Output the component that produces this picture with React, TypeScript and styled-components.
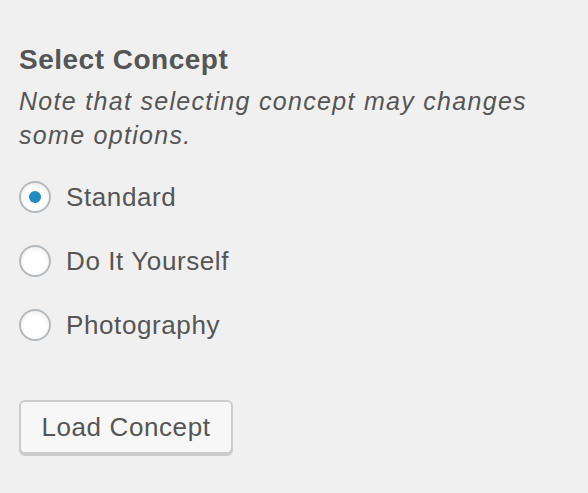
import styled, { createGlobalStyle } from "styled-components";

const GlobalStyle = createGlobalStyle`
  html, body {
    margin: 0;
    padding: 0;
    background: #f0f0f0;
  }
  body {
    font-family: "Liberation Sans", Arial, sans-serif;
    color: #555;
  }
`;

const Panel = styled.div`
  padding: 40px 19px 0;
  width: 588px;
  height: 493px;
  box-sizing: border-box;
`;

const Heading = styled.h3`
  margin: 0;
  font-size: 28px;
  line-height: 40px;
  font-weight: 700;
  letter-spacing: 0.5px;
  color: #555;
`;

const Note = styled.p`
  margin: 4px 0 0;
  font-size: 25px;
  line-height: 34px;
  font-style: italic;
  letter-spacing: 1.3px;
  color: #555;
  max-width: 530px;
`;

const OptionList = styled.div`
  display: flex;
  flex-direction: column;
  gap: 32px;
  margin-top: 29px;
`;

const Option = styled.label`
  display: flex;
  align-items: center;
  gap: 15px;
  font-size: 26px;
  line-height: 32px;
  letter-spacing: 0.6px;
  color: #555;
  cursor: pointer;
`;

const Radio = styled.span<{ $checked?: boolean }>`
  position: relative;
  width: 32px;
  height: 32px;
  box-sizing: border-box;
  border-radius: 50%;
  border: 2px solid #b4b9be;
  background: #fff;
  box-shadow: inset 0 2px 4px rgba(0, 0, 0, 0.08);
  flex-shrink: 0;

  &::after {
    content: "";
    display: ${({ $checked }) => ($checked ? "block" : "none")};
    position: absolute;
    left: 50%;
    top: 50%;
    width: 12px;
    height: 12px;
    margin: -6px 0 0 -6px;
    border-radius: 50%;
    background: #1e8cbe;
  }
`;

const Button = styled.button`
  margin-top: 59px;
  width: 214px;
  height: 54px;
  border: 2px solid #ccc;
  border-radius: 6px;
  background: #f7f7f7;
  box-shadow: 0 2px 0 #ccc;
  font-family: "Liberation Sans", Arial, sans-serif;
  font-size: 26px;
  letter-spacing: 0.6px;
  color: #555;
  padding: 0;
  cursor: pointer;
`;

const options = [
  { label: "Standard", checked: true },
  { label: "Do It Yourself", checked: false },
  { label: "Photography", checked: false },
];

export default function App() {
  return (
    <>
      <GlobalStyle />
      <Panel>
        <Heading>Select Concept</Heading>
        <Note>Note that selecting concept may changes some options.</Note>
        <OptionList>
          {options.map((o) => (
            <Option key={o.label}>
              <Radio $checked={o.checked} />
              {o.label}
            </Option>
          ))}
        </OptionList>
        <Button>Load Concept</Button>
      </Panel>
    </>
  );
}
